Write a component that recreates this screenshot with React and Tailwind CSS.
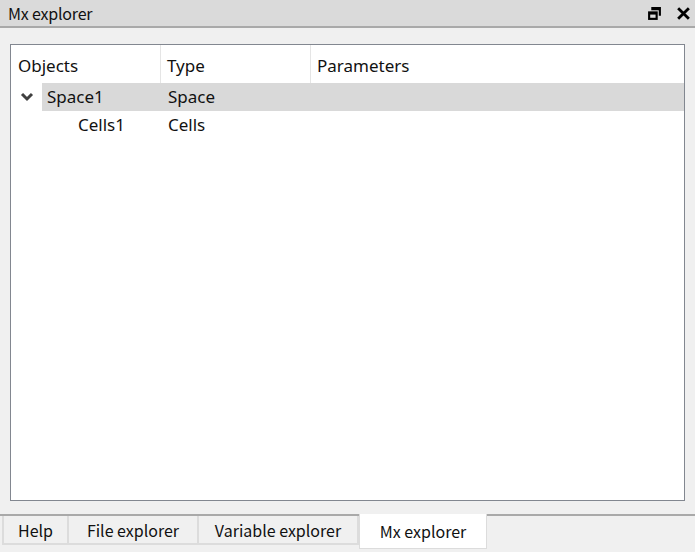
import React from 'react';

const treeFont = { fontFamily: '"Noto Sans", "Open Sans", sans-serif' };
const uiFont = { fontFamily: '"Noto Sans CJK JP", "Noto Sans", sans-serif' };

const RestoreIcon = () => (
  <svg width="15" height="15" viewBox="0 0 14 14" className="block">
    <path d="M4 1h9v8h-2V4H4z" fill="#000" />
    <rect x="1" y="5" width="9" height="8" fill="#000" />
    <rect x="3" y="8" width="5" height="3" fill="#dadada" />
  </svg>
);

const CloseIcon = () => (
  <svg width="15" height="15" viewBox="0 0 14 14" className="block">
    <path d="M2 2L12 12M12 2L2 12" stroke="#000" strokeWidth="2.6" />
  </svg>
);

const Chevron = () => (
  <svg width="14" height="10" viewBox="0 0 14 10" className="block">
    <path d="M2 2l5 5 5-5" fill="none" stroke="#404040" strokeWidth="3" />
  </svg>
);

const tabs = [
  { label: 'Help', w: 'w-[67px] border-l-2' },
  { label: 'File explorer', w: 'w-[130px]' },
  { label: 'Variable explorer', w: 'w-[160px]' },
];

export default function App() {
  return (
    <div className="w-[695px] h-[552px] bg-[#f0f0f0] flex flex-col overflow-hidden">
      {/* Title bar */}
      <div className="h-[28px] bg-[#dadada] border-b-2 border-[#a9a9a9] flex items-center justify-between pl-[8px] pr-[4px]">
        <span className="text-[16px] text-[#111] tracking-[-0.2px]" style={uiFont}>Mx explorer</span>
        <div className="flex items-center gap-[14px]">
          <RestoreIcon />
          <CloseIcon />
        </div>
      </div>

      {/* Tree panel */}
      <div className="flex-1 px-[10px] pt-[16px] pb-[13px]">
        <div className="h-full bg-white border border-[#828790] flex flex-col text-[17px] text-[#111]" style={treeFont}>
          <div className="h-[38px] flex items-stretch">
            <div className="w-[150px] border-r border-[#e5e5e5] flex items-center pt-[3px] pl-[7px]">Objects</div>
            <div className="w-[150px] border-r border-[#e5e5e5] flex items-center pt-[3px] pl-[6px]">Type</div>
            <div className="flex items-center pt-[3px] pl-[6px]">Parameters</div>
          </div>
          <div className="h-[28px] flex items-center">
            <div className="w-[31px] flex justify-center"><Chevron /></div>
            <div className="flex-1 h-full bg-[#d9d9d9] flex items-center">
              <div className="w-[120px] pl-[5px]">Space1</div>
              <div className="pl-[6px]">Space</div>
            </div>
          </div>
          <div className="h-[28px] flex items-center">
            <div className="w-[151px] pl-[67px]">Cells1</div>
            <div className="pl-[6px]">Cells</div>
          </div>
        </div>
      </div>

      {/* Tab bar */}
      <div className="h-[38px] border-t-2 border-[#a9a9a9] flex items-start px-[2px]" style={uiFont}>
        {tabs.map((t) => (
          <div
            key={t.label}
            className={`${t.w} h-[29px] border-r-2 border-b-2 border-[#dcdcdc] flex items-center justify-center text-[16px] text-[#111]`}
          >
            {t.label}
          </div>
        ))}
        <div className="w-[128px] h-[35px] -mt-[2px] bg-white border border-[#dcdcdc] border-t-0 flex items-center justify-center text-[16px] text-[#111]">
          Mx explorer
        </div>
      </div>
    </div>
  );
}
